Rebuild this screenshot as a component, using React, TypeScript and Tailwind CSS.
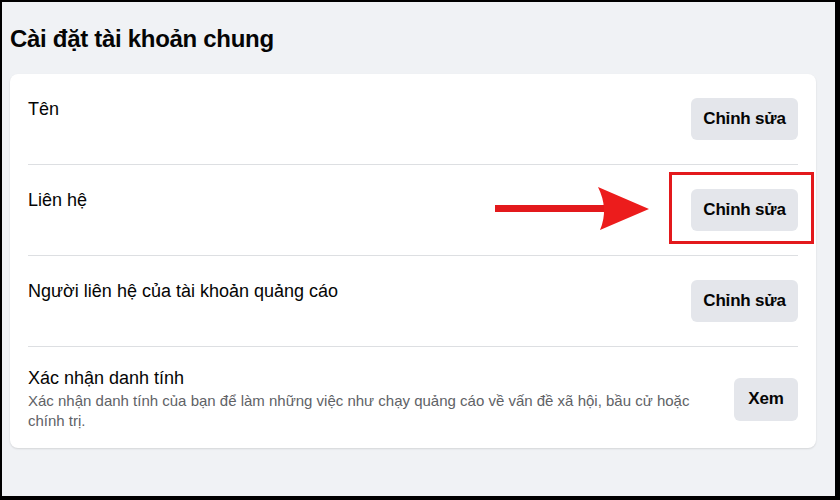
export default function App() {
  const rows = [
    { label: "Tên" },
    { label: "Liên hệ" },
    { label: "Người liên hệ của tài khoản quảng cáo" },
  ];

  return (
    <div
      className="relative h-[500px] w-[840px] overflow-hidden border-t-2 border-l-2 border-r-[5px] border-b-[4px] border-black bg-[#f0f2f5] text-[#050505]"
      style={{ fontFamily: '"Liberation Sans", Arial, sans-serif' }}
    >
      <h1 className="pl-2 pt-[21px] text-[24px] font-bold leading-8 tracking-[-0.3px]">Cài đặt tài khoản chung</h1>

      <div className="ml-2 mt-[19px] w-[806px] rounded-lg bg-white shadow-[0_1px_2px_rgba(0,0,0,0.12)]">
        {rows.map((r) => (
          <div key={r.label}>
            <div className="flex items-start justify-between px-[18px] py-6">
              <span className="text-[18px] leading-[22px]">{r.label}</span>
              <button className="h-[42px] w-[107px] rounded-md bg-[#e4e6eb] text-[17px] font-bold tracking-[-0.2px]">Chỉnh sửa</button>
            </div>
            <div className="mx-[18px] h-px bg-[#dddfe2]" />
          </div>
        ))}

        <div className="flex items-center justify-between px-[18px] pb-[17px] pt-5">
          <div className="w-[690px]">
            <p className="text-[18px] leading-[22px]">Xác nhận danh tính</p>
            <p className="mt-[2px] text-[15px] leading-5 text-[#606266]">
              Xác nhận danh tính của bạn để làm những việc như chạy quảng cáo về vấn đề xã hội, bầu cử hoặc chính trị.
            </p>
          </div>
          <button className="h-[43px] w-[64px] rounded-md bg-[#e4e6eb] text-[17px] font-bold tracking-[-0.2px]">Xem</button>
        </div>
      </div>

      {/* red highlight annotation */}
      <div className="absolute left-[667px] top-[170px] h-[72px] w-[145px] border-[3px] border-[#e3191c]" />
      <svg className="absolute left-[491px] top-[181px]" width="160" height="52" viewBox="0 0 160 52">
        <rect x="2" y="22" width="112" height="7" fill="#e3191c" />
        <path d="M105 4 L156 26 L107 47 Q116 26 105 4 Z" fill="#ec1c1c" />
      </svg>
    </div>
  );
}
